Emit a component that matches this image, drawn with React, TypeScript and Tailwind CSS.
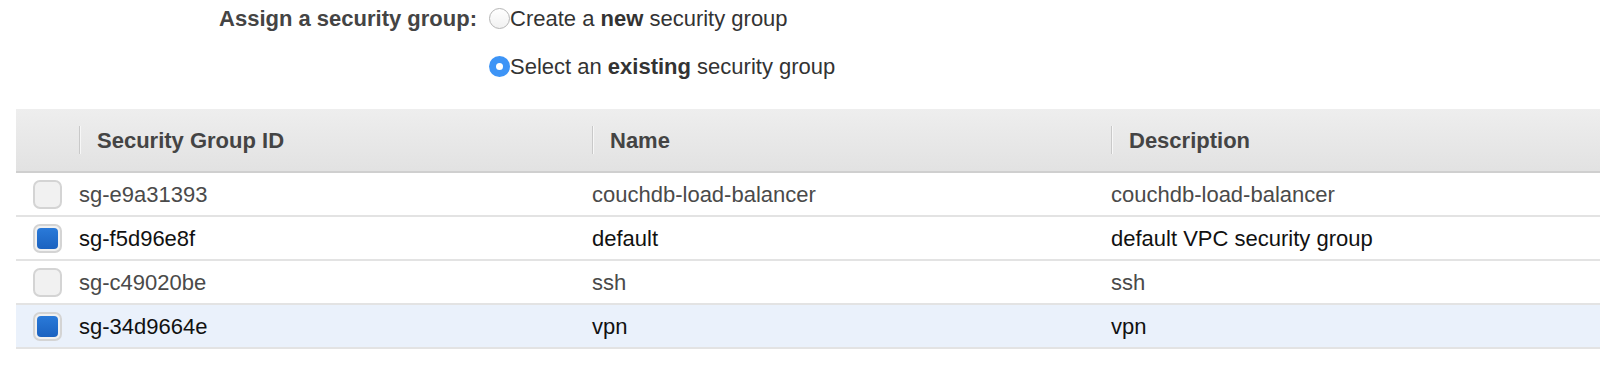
import { Fragment } from 'react';

type Group = { id: string; name: string; description: string; checked: boolean; highlight?: boolean };

const groups: Group[] = [
  { id: 'sg-e9a31393', name: 'couchdb-load-balancer', description: 'couchdb-load-balancer', checked: false },
  { id: 'sg-f5d96e8f', name: 'default', description: 'default VPC security group', checked: true },
  { id: 'sg-c49020be', name: 'ssh', description: 'ssh', checked: false },
  { id: 'sg-34d9664e', name: 'vpn', description: 'vpn', checked: true, highlight: true },
];

const Radio = ({ on }: { on: boolean }) =>
  on ? (
    <span className="flex h-[21px] w-[21px] shrink-0 items-center justify-center rounded-full bg-[#3d94f6]">
      <span className="h-[7px] w-[7px] rounded-full bg-white" />
    </span>
  ) : (
    <span className="h-[21px] w-[21px] shrink-0 rounded-full border border-[#b5b5b5] bg-gradient-to-b from-white to-[#f1f1f1]" />
  );

const Checkbox = ({ on }: { on: boolean }) => (
  <span className="flex h-[29px] w-[29px] items-center justify-center rounded-[7px] border-2 border-[#d4d4d4] bg-[#f1f1f1]">
    {on && <span className="h-[21px] w-[21px] rounded-[4px] bg-gradient-to-b from-[#2a7ad9] to-[#1b62c0]" />}
  </span>
);

const HeaderCell = ({ label }: { label: string }) => (
  <div className="flex h-full items-center">
    <div className="h-[28px] w-px bg-[#c9c9c9] shadow-[1px_0_0_#f7f7f7]" />
    <span className="pl-[17px] font-bold text-[#444]">{label}</span>
  </div>
);

export default function App() {
  return (
    <div className="min-h-screen bg-white text-[22px]" style={{ fontFamily: '"Liberation Sans", Arial, sans-serif' }}>
      {/* Security group choice */}
      <div className="flex pt-[5px]">
        <div className="w-[477px] pt-[1px] text-right font-bold leading-[26px] text-[#444]">Assign a security group:</div>
        <div className="ml-[12px] flex flex-col gap-[22px]">
          <label className="flex h-[26px] items-center text-[#333]">
            <Radio on={false} />
            <span>
              Create a <b>new</b> security group
            </span>
          </label>
          <label className="flex h-[26px] items-center text-[#333]">
            <Radio on={true} />
            <span>
              Select an <b>existing</b> security group
            </span>
          </label>
        </div>
      </div>

      {/* Table */}
      <div className="ml-[16px] mt-[30px] grid grid-cols-[63px_513px_519px_1fr]">
        <div className="col-span-4 grid h-[64px] grid-cols-subgrid border-b-2 border-[#cfcfcf] bg-gradient-to-b from-[#eeeeee] to-[#e2e2e2]">
          <div />
          <HeaderCell label="Security Group ID" />
          <HeaderCell label="Name" />
          <HeaderCell label="Description" />
        </div>
        {groups.map((g) => (
          <Fragment key={g.id}>
            <div
              className={`col-span-4 grid h-[44px] grid-cols-subgrid items-center border-b-2 border-[#e3e3e3] ${
                g.highlight ? 'bg-[#eaf1fb]' : 'bg-white'
              } ${g.checked ? 'text-[#111]' : 'text-[#4a4a4a]'}`}
            >
              <div className="pl-[17px]">
                <Checkbox on={g.checked} />
              </div>
              <div>{g.id}</div>
              <div>{g.name}</div>
              <div>{g.description}</div>
            </div>
          </Fragment>
        ))}
      </div>
    </div>
  );
}
